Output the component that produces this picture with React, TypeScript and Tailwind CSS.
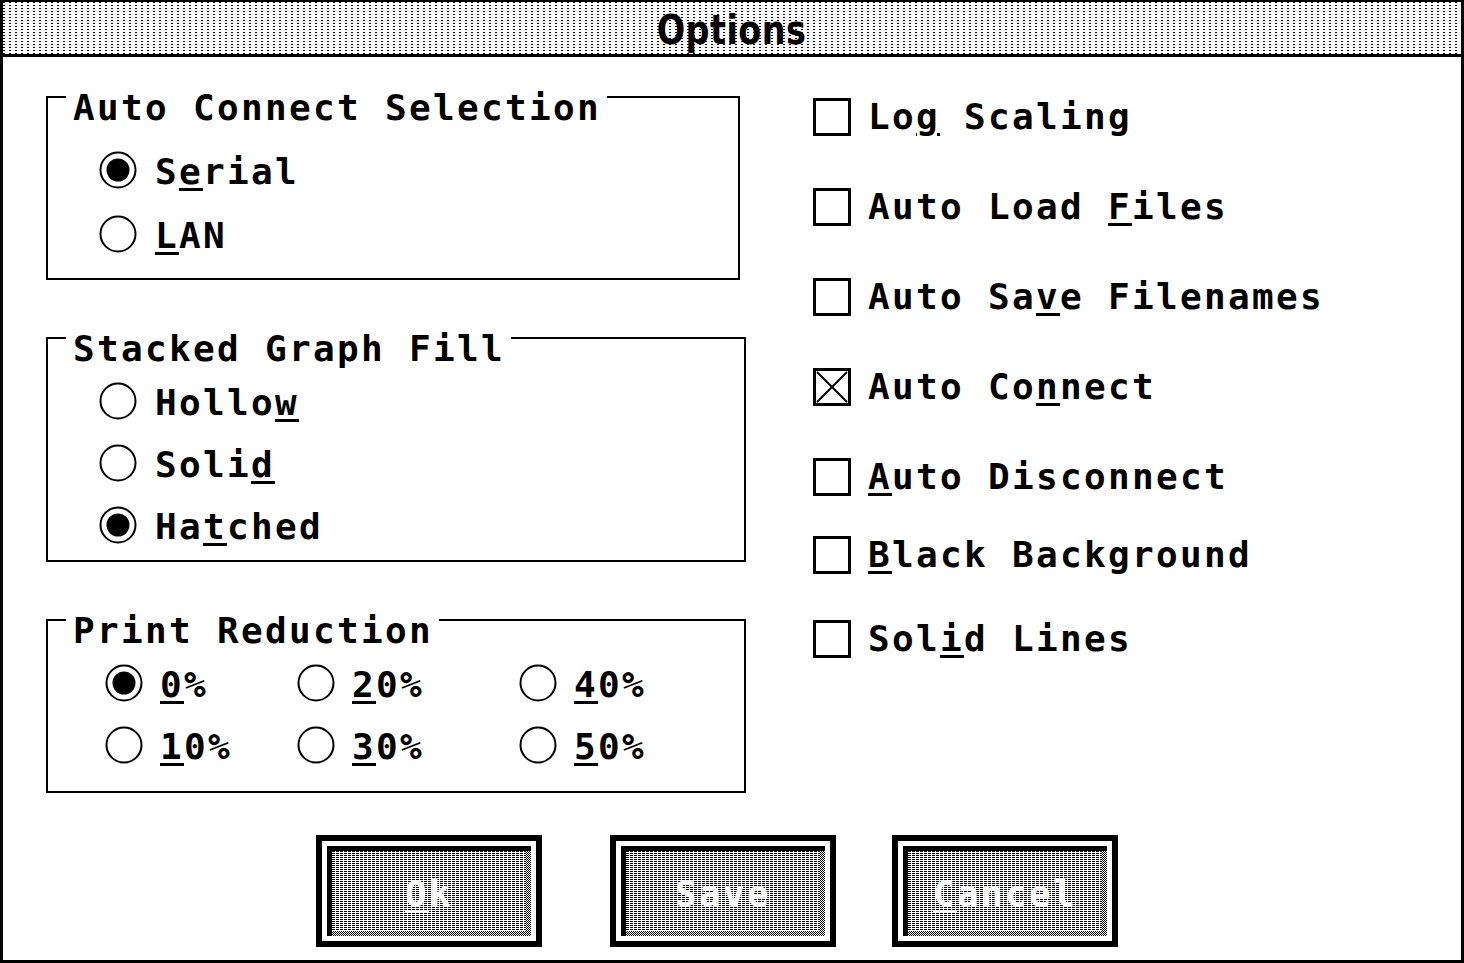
import React from "react";

const Mn = ({ text, u }: { text: string; u?: number }) => {
  if (u === undefined) return <>{text}</>;
  return (
    <>
      {text.slice(0, u)}
      <span className="underline decoration-[3px] underline-offset-[4px]">{text[u]}</span>
      {text.slice(u + 1)}
    </>
  );
};

const Radio = ({ on }: { on?: boolean }) => (
  <svg width="38" height="38" viewBox="0 0 38 38" className="shrink-0 mb-[4px]">
    <circle cx="19" cy="19" r="17.5" fill="white" stroke="black" strokeWidth="2" />
    {on && <circle cx="19" cy="19" r="11.5" fill="black" />}
  </svg>
);

const Check = ({ on }: { on?: boolean }) => (
  <div className="w-[38px] h-[38px] border-[3px] border-black shrink-0">
    {on && (
      <svg width="32" height="32" viewBox="0 0 32 32">
        <path d="M1 1 L31 31 M31 1 L1 31" stroke="black" strokeWidth="2" />
      </svg>
    )}
  </div>
);

const Group = ({
  title,
  width,
  body,
  children,
}: {
  title: string;
  width: string;
  body: string;
  children: React.ReactNode;
}) => (
  <div className={`flex flex-col shrink-0 ${width}`}>
    <div className="flex h-[36px] shrink-0">
      <div className="w-[20px] mt-[6px] border-l-2 border-t-2 border-black" />
      <div className="pl-[7px] pr-[6px] whitespace-pre">{title}</div>
      <div className="flex-1 mt-[6px] border-r-2 border-t-2 border-black" />
    </div>
    <div className={`border-x-2 border-b-2 border-black flex flex-col shrink-0 ${body}`}>{children}</div>
  </div>
);

const RadioRow = ({ text, u, on }: { text: string; u?: number; on?: boolean }) => (
  <div className="flex items-center h-[36px] shrink-0 pl-[51px] gap-[18px]">
    <Radio on={on} />
    <span className="whitespace-pre">
      <Mn text={text} u={u} />
    </span>
  </div>
);

const Pct = ({ text, on }: { text: string; on?: boolean }) => (
  <div className="flex items-center h-[36px] gap-[17px]">
    <Radio on={on} />
    <span>
      <Mn text={text} u={0} />
    </span>
  </div>
);

const checks = [
  { text: "Log Scaling", u: 2, mt: "mt-0" },
  { text: "Auto Load Files", u: 10, mt: "mt-[50px]" },
  { text: "Auto Save Filenames", u: 7, mt: "mt-[50px]" },
  { text: "Auto Connect", u: 7, mt: "mt-[50px]", on: true },
  { text: "Auto Disconnect", u: 0, mt: "mt-[50px]" },
  { text: "Black Background", u: 0, mt: "mt-[38px]" },
  { text: "Solid Lines", u: 3, mt: "mt-[44px]" },
];

const Button = ({ text, u, className }: { text: string; u?: number; className?: string }) => (
  <div className={`w-[226px] h-[112px] shrink-0 border-[6px] border-black bg-white p-[5px] flex ${className ?? ""}`}>
    <div className="flex-1 flex border-t-[5px] border-l-[5px] border-black pr-[5px] pb-[5px] bg-[image:repeating-conic-gradient(#000_0_25%,#fff_0_50%)] bg-[length:2px_2px]">
      <div className="flex-1 flex items-center justify-center pt-[6px] text-white bg-[image:repeating-linear-gradient(90deg,transparent_0_3px,#fff_3px_4px),repeating-linear-gradient(180deg,#000_0_1px,#fff_1px_2px)]">
        <span>
          <Mn text={text} u={u} />
        </span>
      </div>
    </div>
  </div>
);

export default function App() {
  return (
    <div className="w-[1464px] h-[963px] bg-white text-black border-[3px] border-t-2 border-black flex flex-col overflow-hidden font-['DejaVu_Sans_Mono',monospace] font-bold text-[36px] leading-[36px] tracking-[2.33px]">
      <div className="h-[55px] shrink-0 border-b-[3px] border-black flex items-center justify-center pt-[4px] bg-[image:repeating-linear-gradient(90deg,transparent_0_2px,#fff_2px_6px),repeating-linear-gradient(180deg,#000_0_1px,#fff_1px_3px)]">
        <span className="font-['DejaVu_Sans_Condensed','DejaVu_Sans',sans-serif] font-stretch-condensed text-[40px] tracking-[0.5px] leading-none scale-x-[0.93]">
          Options
        </span>
      </div>

      <div className="flex flex-col shrink-0">
        <div className="flex pl-[43px] shrink-0">
          <div className="flex flex-col w-[700px] pt-[33px] shrink-0">
            <Group title="Auto Connect Selection" width="w-[694px]" body="pt-[28px] pb-[24px] gap-[28px]">
              <RadioRow text="Serial" u={1} on />
              <RadioRow text="LAN" u={0} />
            </Group>
            <div className="mt-[51px] shrink-0">
              <Group title="Stacked Graph Fill" width="w-[700px]" body="pt-[18px] pb-[15px] gap-[26px]">
                <RadioRow text="Hollow" u={5} />
                <RadioRow text="Solid" u={4} />
                <RadioRow text="Hatched" u={2} on />
              </Group>
            </div>
            <div className="mt-[51px] shrink-0">
              <Group title="Print Reduction" width="w-[700px]" body="pt-[18px] pb-[26px] pl-[57px]">
                <div className="grid grid-cols-[192px_222px_1fr] gap-y-[26px]">
                  <Pct text="0%" on />
                  <Pct text="20%" />
                  <Pct text="40%" />
                  <Pct text="10%" />
                  <Pct text="30%" />
                  <Pct text="50%" />
                </div>
              </Group>
            </div>
          </div>

          <div className="flex flex-col ml-[67px] pt-[40px]">
            {checks.map((c) => (
              <div key={c.text} className={`flex items-center h-[40px] shrink-0 gap-[17px] ${c.mt}`}>
                <Check on={c.on} />
                <span className="whitespace-pre">
                  <Mn text={c.text} u={c.u} />
                </span>
              </div>
            ))}
          </div>
        </div>

        <div className="flex pl-[313px] mt-[42px] shrink-0">
          <Button text="Ok" u={0} />
          <Button text="Save" className="ml-[68px]" />
          <Button text="Cancel" u={0} className="ml-[56px]" />
        </div>
      </div>
    </div>
  );
}
